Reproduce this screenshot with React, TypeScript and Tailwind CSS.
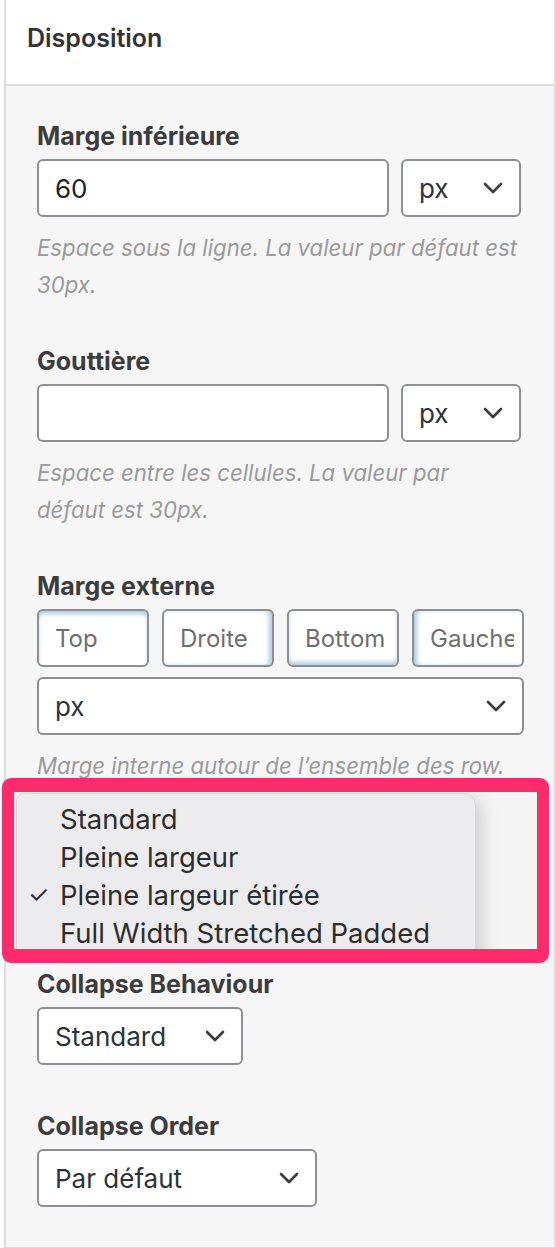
import React from "react";

function Chevron() {
  return (
    <svg width="20" height="12" viewBox="0 0 20 12" fill="none" className="shrink-0">
      <polyline points="2,2 10,10 18,2" stroke="#3c3c3c" strokeWidth="2.6" strokeLinecap="round" strokeLinejoin="round" />
    </svg>
  );
}

function Select({ value, className = "" }: { value: string; className?: string }) {
  return (
    <div
      className={`flex h-[58px] items-center justify-between rounded-[6px] border-2 border-[#8c8f94] bg-white pl-[16px] pr-[16px] text-[26px] text-[#2c3338] ${className}`}
    >
      <span>{value}</span>
      <Chevron />
    </div>
  );
}

function Label({ children }: { children: React.ReactNode }) {
  return <div className="mb-[8px] text-[25px] font-bold leading-[30px] text-[#3c3c3c]">{children}</div>;
}

function Help({ children }: { children: React.ReactNode }) {
  return (
    <p className="mt-[12px] max-w-[483px] text-[22.2px] italic leading-[37px] text-[#9a9a9a]">{children}</p>
  );
}

const sides = [
  { label: "Top", glow: "shadow-[inset_0_4px_4px_-1px_rgba(110,160,200,0.55)]" },
  { label: "Droite", glow: "shadow-[inset_-4px_0_4px_-1px_rgba(110,160,200,0.55)]" },
  { label: "Bottom", glow: "shadow-[inset_0_-4px_4px_-1px_rgba(110,160,200,0.55)]" },
  { label: "Gauche", glow: "shadow-[inset_4px_0_4px_-1px_rgba(110,160,200,0.55)]" },
];

const layouts = ["Standard", "Pleine largeur", "Pleine largeur étirée", "Full Width Stretched Padded"];

export default function App() {
  return (
    <div className="relative h-[1248px] w-[556px] bg-white font-[Inter,sans-serif]">
      <div className="ml-[4px] w-[552px] border-x-2 border-b-2 border-[#dcdcde]">
        {/* Header */}
        <div className="flex h-[86px] items-center border-b-2 border-[#dcdcde] bg-white pb-[6px] pl-[21px]">
          <span className="text-[25px] font-semibold text-[#333]">Disposition</span>
        </div>

        <div className="bg-[#f6f6f6] pb-[40px] pl-[31px] pr-[30px] pt-[35px]">
          {/* Marge inférieure */}
          <div className="mb-[43px]">
            <Label>Marge inférieure</Label>
            <div className="flex w-[484px] gap-[12px]">
              <input
                readOnly
                value="60"
                className="h-[58px] min-w-0 flex-1 rounded-[6px] border-2 border-[#8c8f94] bg-white pl-[16px] text-[26px] text-[#222] outline-none"
              />
              <Select value="px" className="w-[120px]" />
            </div>
            <Help>Espace sous la ligne. La valeur par défaut est 30px.</Help>
          </div>

          {/* Gouttière */}
          <div className="mb-[43px]">
            <Label>Gouttière</Label>
            <div className="flex w-[484px] gap-[12px]">
              <input
                readOnly
                className="h-[58px] min-w-0 flex-1 rounded-[6px] border-2 border-[#8c8f94] bg-white outline-none"
              />
              <Select value="px" className="w-[120px]" />
            </div>
            <Help>Espace entre les cellules. La valeur par défaut est 30px.</Help>
          </div>

          {/* Marge externe */}
          <div className="mb-[43px]">
            <Label>Marge externe</Label>
            <div className="grid grid-cols-4 gap-[13px]">
              {sides.map((s) => (
                <input
                  key={s.label}
                  readOnly
                  placeholder={s.label}
                  className={`h-[58px] min-w-0 rounded-[6px] border-2 border-[#8c8f94] bg-white pl-[16px] pr-[8px] text-[24px] text-[#6e6e6e] outline-none placeholder:text-[#6e6e6e] ${s.glow}`}
                />
              ))}
            </div>
            <Select value="px" className="mt-[10px] w-full" />
            <Help>Marge interne autour de l’ensemble des row.</Help>
          </div>

          {/* Row layout field, hidden behind the open menu */}
          <div aria-hidden className="invisible mb-[46px]">
            <Label>Disposition de ligne</Label>
            <Select value="Pleine largeur étirée" className="w-[330px]" />
          </div>

          {/* Collapse Behaviour */}
          <div className="mb-[46px]">
            <Label>Collapse Behaviour</Label>
            <Select value="Standard" className="w-[206px]" />
          </div>

          {/* Collapse Order */}
          <div>
            <Label>Collapse Order</Label>
            <Select value="Par défaut" className="w-[280px]" />
          </div>
        </div>
      </div>

      {/* Highlight annotation with open dropdown */}
      <div className="absolute left-[2px] top-[778px] h-[185px] w-[547px] overflow-hidden rounded-[9px] border-x-[12px] border-y-[14px] border-[#fe2b6c] bg-[#f5f5f6]">
        <div className="absolute left-[2px] top-[1px] h-[200px] w-[460px] rounded-tl-[8px] rounded-tr-[12px] border border-[#d6d6d8] bg-[#ececee] pt-[6px] shadow-[6px_6px_18px_rgba(0,0,0,0.16)]">
          {layouts.map((item, i) => (
            <div key={item} className="relative pl-[43px] text-[27.5px] leading-[38px] text-[#2d2d2d]">
              {i === 2 && <span className="absolute left-[11px] top-0 text-[24px]">✓</span>}
              {item}
            </div>
          ))}
        </div>
      </div>
    </div>
  );
}
